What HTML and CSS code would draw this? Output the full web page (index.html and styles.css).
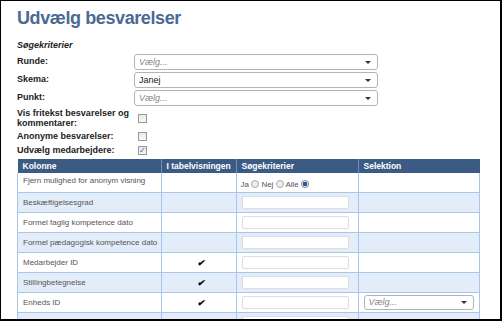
FILE: index.html
```html
<!DOCTYPE html>
<html lang="da">
<head>
    <meta charset="UTF-8">
    <title>Udvælg besvarelser</title>
    <link rel="stylesheet" href="styles.css">
</head>
<body>
<div class="ramme">
    <h1>Udvælg besvarelser</h1>
    <h3>Søgekriterier</h3>

    <div class="felt">
        <label>Runde:</label>
        <div class="vaelg tom">Vælg...</div>
    </div>
    <div class="felt">
        <label>Skema:</label>
        <div class="vaelg">Janej</div>
    </div>
    <div class="felt">
        <label>Punkt:</label>
        <div class="vaelg tom">Vælg...</div>
    </div>
    <div class="felt hoej">
        <label>Vis fritekst besvarelser og kommentarer:</label>
        <span class="boks"></span>
    </div>
    <div class="felt lav">
        <label>Anonyme besvarelser:</label>
        <span class="boks"></span>
    </div>
    <div class="felt lav">
        <label>Udvælg medarbejdere:</label>
        <span class="boks valgt">&#10003;</span>
    </div>

    <table class="kolonner">
        <tr>
            <th class="k1">Kolonne</th>
            <th class="k2">I tabelvisningen</th>
            <th class="k3">Søgekriterier</th>
            <th class="k4">Selektion</th>
        </tr>
        <tr class="foerste">
            <td>Fjern mulighed for anonym visning</td>
            <td></td>
            <td class="radios">Ja <span class="radio"></span> Nej <span class="radio"></span> Alle <span class="radio on"></span></td>
            <td></td>
        </tr>
        <tr>
            <td>Beskæftigelsesgrad</td>
            <td></td>
            <td><span class="felttekst"></span></td>
            <td></td>
        </tr>
        <tr>
            <td>Formel faglig kompetence dato</td>
            <td></td>
            <td><span class="felttekst"></span></td>
            <td></td>
        </tr>
        <tr>
            <td>Formel pædagogisk kompetence dato</td>
            <td></td>
            <td><span class="felttekst"></span></td>
            <td></td>
        </tr>
        <tr>
            <td>Medarbejder ID</td>
            <td class="flueben">&#10004;</td>
            <td><span class="felttekst"></span></td>
            <td></td>
        </tr>
        <tr>
            <td>Stillingbetegnelse</td>
            <td class="flueben">&#10004;</td>
            <td><span class="felttekst"></span></td>
            <td></td>
        </tr>
        <tr>
            <td>Enheds ID</td>
            <td class="flueben">&#10004;</td>
            <td><span class="felttekst"></span></td>
            <td><div class="vaelg lille tom">Vælg...</div></td>
        </tr>
        <tr>
            <td>&nbsp;</td>
            <td></td>
            <td><span class="felttekst"></span></td>
            <td></td>
        </tr>
    </table>
</div>
</body>
</html>
```

FILE: styles.css
```css
body {
    margin: 0;
    font-family: "Liberation Sans", Arial, sans-serif;
    color: #222;
}

.ramme {
    box-sizing: border-box;
    width: 502px;
    height: 321px;
    border-style: solid;
    border-color: #000;
    border-width: 1px 2px 2px 1px;
    background: #fff;
    padding: 0 0 0 16px;
    overflow: hidden;
}

h1 {
    margin: 7px 0 0 0;
    font-size: 18px;
    line-height: 21px;
    letter-spacing: -0.4px;
    color: #4b6a93;
}

h3 {
    margin: 10px 0 3px 0;
    font-size: 9px;
    font-style: italic;
    line-height: 12px;
}

.felt {
    display: flex;
    align-items: flex-start;
    margin-bottom: 2px;
}

.felt label {
    width: 117px;
    flex: none;
    font-size: 9px;
    font-weight: bold;
    line-height: 10px;
    padding-top: 2px;
}

.vaelg {
    box-sizing: border-box;
    position: relative;
    width: 244px;
    height: 16px;
    border: 1px solid #b4b4b4;
    border-radius: 3px;
    font-size: 9px;
    line-height: 14px;
    padding-left: 4px;
    color: #222;
    background: #fff;
}

.vaelg::after {
    content: "";
    position: absolute;
    right: 6px;
    top: 6px;
    border-left: 3px solid transparent;
    border-right: 3px solid transparent;
    border-top: 3px solid #333;
}

.vaelg.tom {
    color: #888;
    font-style: italic;
}

.vaelg.lille {
    width: 110px;
    height: 15px;
    line-height: 13px;
}

.vaelg.lille::after {
    top: 5px;
}

.felt.hoej {
    margin-top: 0;
    margin-bottom: 3px;
}

.felt.hoej label {
    padding-top: 0;
}

.felt.hoej .boks {
    margin-top: 6px;
}

.felt.lav {
    margin-bottom: 4px;
}

.felt.lav label {
    padding-top: 0;
}

.boks {
    box-sizing: border-box;
    width: 9px;
    height: 9px;
    margin-left: 4px;
    margin-top: 1px;
    border: 1px solid #999;
    background: linear-gradient(#e8e8e8, #f8f8f8);
    font-size: 8px;
    line-height: 7px;
    color: #2a5aa8;
    text-align: center;
}

.kolonner {
    border-collapse: collapse;
    width: 459px;
    margin-top: 0;
    font-size: 8px;
    color: #555;
    table-layout: fixed;
}

.kolonner th {
    background: #3c5b84;
    color: #fff;
    font-size: 8.5px;
    font-weight: bold;
    text-align: left;
    height: 14px;
    padding: 0 0 0 5px;
    border-left: 1px solid #6f8fb8;
}

.kolonner th:first-child {
    border-left: none;
}

.k1 { width: 138px; }
.k2 { width: 69px; }
.k3 { width: 116px; }
.k4 { width: 116px; }

.kolonner td {
    height: 19px;
    padding: 0 0 0 5px;
    border: 1px solid #a9c6e8;
    border-top: none;
    vertical-align: middle;
}

.kolonner tr:nth-child(odd) td {
    background: #e3edf9;
}

.kolonner tr.foerste td {
    vertical-align: top;
    padding-top: 3px;
    height: 16px;
}

.kolonner tr.foerste td.radios {
    padding-top: 7px;
    padding-left: 4px;
    height: 12px;
}

.radio {
    display: inline-block;
    box-sizing: border-box;
    width: 8px;
    height: 8px;
    border: 1px solid #aaa;
    border-radius: 50%;
    background: #eee;
    vertical-align: -1px;
}

.radio.on {
    background: radial-gradient(circle, #1d5aa8 0, #1d5aa8 2px, #eee 2.5px);
    border-color: #888;
}

.felttekst {
    display: block;
    box-sizing: border-box;
    width: 107px;
    height: 13px;
    border: 1px solid #ddd;
    border-radius: 2px;
    background: #fff;
}

.flueben {
    text-align: center;
    font-size: 9px;
    font-weight: bold;
    font-style: italic;
    color: #000;
    padding-left: 0;
}
```
